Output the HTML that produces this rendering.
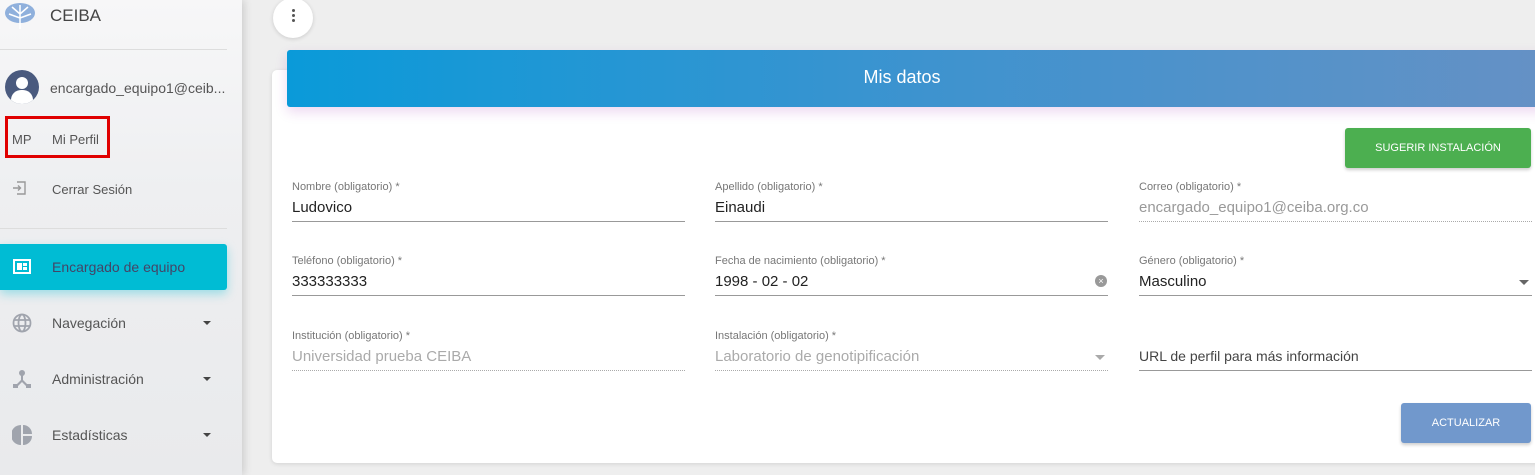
<!DOCTYPE html>
<html><head><meta charset="utf-8"><style>
*{box-sizing:border-box;margin:0;padding:0}
body{width:1535px;height:475px;overflow:hidden;background:#eeeeee;font-family:"Liberation Sans",sans-serif;position:relative}
.side{position:absolute;left:0;top:0;width:242px;height:475px;background:linear-gradient(180deg,#f7f7f8 0%,#eeeff1 40%,#e9eaec 100%);box-shadow:2px 0 8px rgba(0,0,0,.15)}
.abs{position:absolute}
.t{color:#555;font-size:13px}
.nav{position:absolute;left:52px;font-size:14px;color:#555}
.arr{position:absolute;left:203px;width:0;height:0;border-left:4px solid transparent;border-right:4px solid transparent;border-top:4px solid #444}
.card{position:absolute;left:272px;top:70px;width:1290px;height:393px;background:#fff;border-radius:5px;box-shadow:0 1px 4px rgba(0,0,0,.12)}
.hdr{position:absolute;left:287px;top:50px;width:1260px;height:57px;background:linear-gradient(90deg,#0a9ad9,#3d93cf 50%,#6591c5);border-radius:3px;box-shadow:0 5px 12px rgba(156,39,176,.18);color:#fff;font-size:18px;text-align:center;line-height:55px;padding-right:30px;font-weight:300}
.f{position:absolute;width:393px}
.f .l{font-size:11px;color:#777;height:14px}
.f .v{font-size:15px;color:#222;margin-top:4px;height:22px}
.f .u{border-bottom:1px solid #999;height:0}
.f .d{border-bottom:1px dotted #aaa;height:0}
.btn{position:absolute;color:#fff;font-size:11px;text-align:center;border-radius:3px;box-shadow:0 2px 3px rgba(0,0,0,.2)}
</style></head><body>
<div class="side">
<svg class="abs" style="left:4px;top:1px" width="32" height="28" viewBox="0 0 32 28"><ellipse cx="16" cy="12" rx="15" ry="10" fill="#8fb0dc"/><path d="M16 4v24M16 13l-8-7M16 13l8-7M16 17l-11-4M16 17l11-4" stroke="#fff" stroke-width="1.5" fill="none"/></svg>
<div class="abs" style="left:50px;top:6px;font-size:17px;color:#444">CEIBA</div>
<div class="abs" style="left:0;top:49px;width:227px;border-top:1px solid #ddd"></div>
<div class="abs" style="left:5px;top:70px;width:34px;height:34px;border-radius:50%;background:#4a5a7e;overflow:hidden"><div class="abs" style="left:11px;top:7px;width:12px;height:12px;border-radius:50%;background:#fff"></div><div class="abs" style="left:6px;top:20px;width:22px;height:16px;border-radius:10px 10px 0 0;background:#fff"></div></div>
<div class="abs t" style="left:50px;top:80px;font-size:14px">encargado_equipo1@ceib...</div>
<div class="abs" style="left:5px;top:116px;width:105px;height:42px;border:3px solid #e00000"></div>
<div class="abs t" style="left:12px;top:132px">MP</div>
<div class="abs t" style="left:52px;top:132px">Mi Perfil</div>
<svg class="abs" style="left:12px;top:181px" width="14" height="14" viewBox="0 0 14 14" fill="none" stroke="#999" stroke-width="1.4"><path d="M5 1h8v12H5M1 7h7M6 4.5L8.5 7 6 9.5"/></svg>
<div class="abs t" style="left:52px;top:182px">Cerrar Sesión</div>
<div class="abs" style="left:0;top:228px;width:227px;border-top:1px solid #ddd"></div>
<div class="abs" style="left:0;top:244px;width:227px;height:46px;background:#00bcd4;border-radius:0 3px 3px 0;box-shadow:0 4px 10px rgba(0,188,212,.35)"></div>
<div class="abs" style="left:13px;top:259px;width:18px;height:15px;border:2px solid #fff;background:#00bcd4"><div class="abs" style="left:2px;top:2px;width:5px;height:7px;background:#fff"></div><div class="abs" style="left:8px;top:2px;width:4px;height:3px;background:#fff"></div><div class="abs" style="left:8px;top:6px;width:4px;height:3px;background:#fff"></div></div>
<div class="nav" style="top:259px;color:#446">Encargado de equipo</div>
<svg class="abs" style="left:12px;top:313px" width="20" height="20" viewBox="0 0 20 20" fill="none" stroke="#a0a4ad" stroke-width="1.8"><circle cx="10" cy="10" r="8.5"/><ellipse cx="10" cy="10" rx="3.5" ry="8.5"/><path d="M2 7h16M2 13h16"/></svg>
<div class="nav" style="top:315px">Navegación</div><div class="arr" style="top:321px"></div>
<svg class="abs" style="left:12px;top:369px" width="20" height="20" viewBox="0 0 20 20" fill="#a0a4ad"><circle cx="10" cy="4" r="3"/><path d="M9 6h2v5l5 5-1.5 1.5L10 13l-4.5 4.5L4 16l5-5z"/><rect x="1" y="15" width="5" height="4"/><rect x="14" y="15" width="5" height="4"/></svg>
<div class="nav" style="top:371px">Administración</div><div class="arr" style="top:377px"></div>
<svg class="abs" style="left:12px;top:425px" width="20" height="20" viewBox="0 0 20 20" fill="#a0a4ad"><path d="M9 0A10 10 0 0 0 9 20z"/><path d="M11 0A9 9 0 0 1 20 9h-9z"/><path d="M11 11h9a9 9 0 0 1-9 9z"/></svg>
<div class="nav" style="top:427px">Estadísticas</div><div class="arr" style="top:433px"></div>
</div>
<div class="abs" style="left:273px;top:-2px;width:40px;height:40px;border-radius:50%;background:#fff;box-shadow:0 1px 4px rgba(0,0,0,.15)"><div class="abs" style="left:19px;top:11px;width:3px;height:3px;border-radius:50%;background:#555;box-shadow:0 5px 0 #555,0 10px 0 #555"></div></div>
<div class="card"></div>
<div class="hdr">Mis datos</div>
<div class="btn" style="left:1345px;top:128px;width:186px;height:40px;line-height:40px;background:#4caf50">SUGERIR INSTALACIÓN</div>
<div class="btn" style="left:1401px;top:403px;width:130px;height:40px;line-height:40px;background:#7198cc">ACTUALIZAR</div>

<div class="f" style="left:292px;top:181px"><div class="l">Nombre (obligatorio) *</div><div class="v">Ludovico</div><div class="u"></div></div>
<div class="f" style="left:715px;top:181px"><div class="l">Apellido (obligatorio) *</div><div class="v">Einaudi</div><div class="u"></div></div>
<div class="f" style="left:1139px;top:181px"><div class="l">Correo (obligatorio) *</div><div class="v" style="color:#999">encargado_equipo1@ceiba.org.co</div><div class="d"></div></div>

<div class="f" style="left:292px;top:255px"><div class="l">Teléfono (obligatorio) *</div><div class="v">333333333</div><div class="u"></div></div>
<div class="f" style="left:715px;top:255px"><div class="l">Fecha de nacimiento (obligatorio) *</div><div class="v">1998 - 02 - 02</div><div class="u"></div><div class="abs" style="left:380px;top:20px;width:12px;height:12px;border-radius:50%;background:#999;color:#fff;font-size:9px;line-height:12px;text-align:center">×</div></div>
<div class="f" style="left:1139px;top:255px"><div class="l">Género (obligatorio) *</div><div class="v">Masculino</div><div class="u"></div><div class="arr" style="left:380px;top:25px;border-top-color:#666;border-left-width:5px;border-right-width:5px;border-top-width:5px"></div></div>

<div class="f" style="left:292px;top:330px"><div class="l">Institución (obligatorio) *</div><div class="v" style="color:#aaa">Universidad prueba CEIBA</div><div class="d"></div></div>
<div class="f" style="left:715px;top:330px"><div class="l">Instalación (obligatorio) *</div><div class="v" style="color:#aaa">Laboratorio de genotipificación</div><div class="d"></div><div class="arr" style="left:380px;top:25px;border-top-color:#aaa;border-left-width:5px;border-right-width:5px;border-top-width:5px"></div></div>
<div class="f" style="left:1139px;top:330px"><div class="l"></div><div class="v" style="font-size:14px;color:#444">URL de perfil para más información</div><div class="u"></div></div>
</body></html>
